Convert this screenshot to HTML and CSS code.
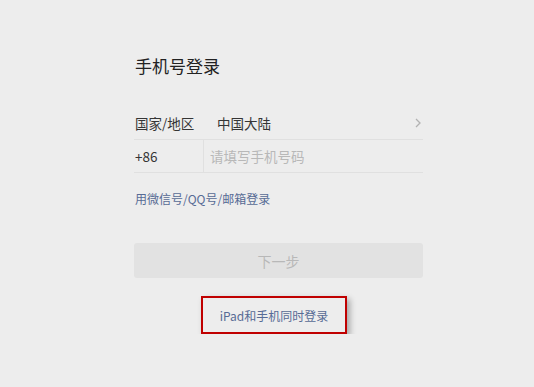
FILE: index.html
```html
<!DOCTYPE html>
<html lang="zh-CN">

<head>
    <meta charset="UTF-8">
    <meta name="viewport" content="width=device-width, initial-scale=1.0">
    <title>手机号登录</title>
    <link rel="stylesheet" href="styles.css">
</head>

<body>

    <div class="login">
        <h2 class="title">手机号登录</h2>

        <div class="row">
            <span class="label">国家/地区</span>
            <span class="value">中国大陆</span>
            <svg class="arrow" width="6" height="10" viewBox="0 0 6 10">
                <polyline points="1,1 5,5 1,9" fill="none" stroke="#b2b2b2" stroke-width="1.3" />
            </svg>
        </div>
        <div class="row">
            <span class="code">+86</span>
            <input type="text" class="phone" placeholder="请填写手机号码">
        </div>

        <a class="link other" href="#">用微信号/QQ号/邮箱登录</a>

        <button class="next">下一步</button>

        <div class="both">
            <a class="link" href="#">iPad和手机同时登录</a>
        </div>
    </div>

</body>

</html>
```

FILE: styles.css
```css
* {
    margin: 0;
    padding: 0;
    box-sizing: border-box;
}

body {
    background-color: #ededed;
    color: #353535;
    font-family: "Noto Sans CJK SC", "Noto Sans", sans-serif;
}

.login {
    width: 289px;
    margin-left: 134px;
    padding-top: 54px;
}

.title {
    font-size: 17px;
    font-weight: normal;
    line-height: 24px;
    color: #222;
    padding-left: 1px;
}

.row {
    display: flex;
    align-items: center;
    height: 33px;
    border-bottom: 1px solid #e0e0e0;
    font-size: 13.5px;
}

.row:first-of-type {
    margin-top: 29px;
}

.label {
    width: 83px;
    padding-left: 1px;
}

.value {
    flex: 1;
}

.arrow {
    margin-right: 2px;
}

.code {
    width: 70px;
    height: 100%;
    line-height: 32px;
    padding-left: 1px;
    border-right: 1px solid #e0e0e0;
}

.phone {
    flex: 1;
    height: 100%;
    border: none;
    outline: none;
    background: transparent;
    padding-left: 6px;
    font-family: inherit;
    font-size: 13.5px;
    color: #353535;
}

.phone::placeholder {
    color: #b8b8b8;
}

.link {
    font-size: 12px;
    color: #576b95;
    text-decoration: none;
}

.other {
    display: block;
    margin-top: 17px;
    line-height: 17px;
    padding-left: 1px;
}

.next {
    display: block;
    width: 100%;
    height: 35px;
    margin-top: 36px;
    border: none;
    border-radius: 3px;
    background-color: #e2e2e2;
    color: #b8b8b8;
    font-family: inherit;
    font-size: 14px;
}

.both {
    width: 146px;
    height: 38px;
    margin: 18px 0 0 67px;
    border: 2px solid #c00000;
    box-shadow: 3px 3px 6px rgba(0, 0, 0, 0.3);
    display: flex;
    align-items: center;
    justify-content: center;
}
```
